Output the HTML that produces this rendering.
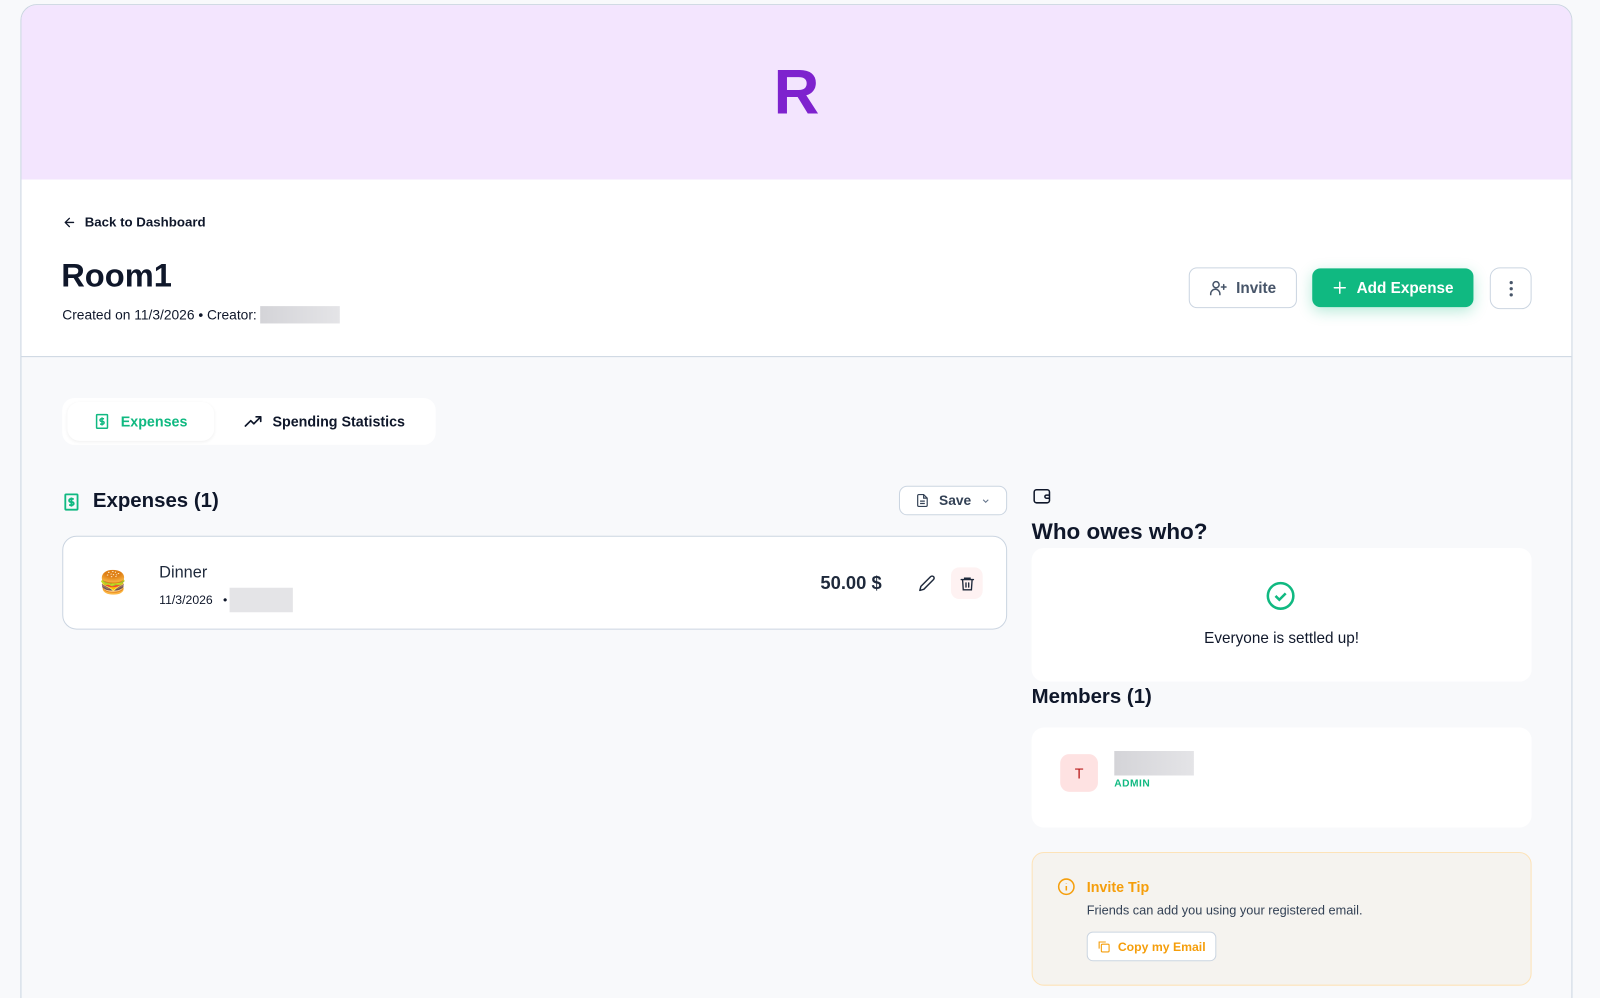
<!DOCTYPE html>
<html><head><meta charset="utf-8"><style>
*{box-sizing:border-box;margin:0;padding:0}
html,body{width:1600px;height:998px;overflow:hidden;background:#f8f9fb}
body{font-family:"Liberation Sans",Arial,sans-serif;color:#0f172a;position:relative}
.wrap{position:absolute;left:0;top:0;width:1568px;height:978px;transform:scale(1.0204);transform-origin:0 0}
.card{position:absolute;left:20px;top:4px;width:1521px;height:1010px;border:1px solid #cbd5e1;border-radius:16px 16px 0 0;overflow:hidden;background:#f8f9fb}
.banner{height:171px;background:#f3e5fe;display:flex;align-items:center;justify-content:center;font-size:62px;font-weight:bold;color:#7e22ce}
.head{background:#fff;height:174px;border-bottom:1px solid #cbd5e1;position:relative}
.abs{position:absolute}
.btn{position:absolute;border:1px solid #cbd5e1;border-radius:8px;background:#fff;display:flex;align-items:center;justify-content:center;gap:8px}
.blur{display:inline-block;background:linear-gradient(90deg,#d4d4d8,#e4e4e7);}
.white{position:absolute;background:#fff;border-radius:12px}
</style></head><body><div class="wrap">
<div class="card">
<div class="banner">R</div>
<div class="head">
 <div class="abs" style="left:40px;top:34px;font-size:13px;font-weight:bold;display:flex;align-items:center;gap:8px">
  <svg width="14" height="14" viewBox="0 0 24 24" fill="none" stroke="#0f172a" stroke-width="2.2" stroke-linecap="round" stroke-linejoin="round"><path d="M19 12H5M12 19l-7-7 7-7"/></svg>Back to Dashboard</div>
 <div class="abs" style="left:39px;top:76px;font-size:32px;font-weight:bold">Room1</div>
 <div class="abs" style="left:40px;top:124px;font-size:13.5px;display:flex;align-items:center">Created on 11/3/2026 • Creator:&nbsp;<span class="blur" style="width:78px;height:17px"></span></div>
 <div class="btn" style="left:1144px;top:86px;width:106px;height:40px;color:#475569;font-size:15px;font-weight:bold">
  <svg width="18" height="18" viewBox="0 0 24 24" fill="none" stroke="#475569" stroke-width="2" stroke-linecap="round"><circle cx="9" cy="8" r="4"/><path d="M2 21v-1a6 6 0 0 1 12 0v1M19 8v6M16 11h6"/></svg>Invite</div>
 <div class="btn" style="left:1265px;top:87px;width:158px;height:38px;background:#10b981;border:none;color:#fff;font-size:15px;font-weight:bold;box-shadow:0 4px 14px rgba(16,185,129,.3)">
  <svg width="16" height="16" viewBox="0 0 24 24" fill="none" stroke="#fff" stroke-width="2.2" stroke-linecap="round"><path d="M12 4v16M4 12h16"/></svg>Add Expense</div>
 <div class="btn" style="left:1439px;top:86px;width:41px;height:41px;border-radius:10px">
  <svg width="4" height="16" viewBox="0 0 4 16"><circle cx="2" cy="2" r="1.6" fill="#475569"/><circle cx="2" cy="8" r="1.6" fill="#475569"/><circle cx="2" cy="14" r="1.6" fill="#475569"/></svg></div>
</div>
<div class="white" style="left:40px;top:385px;width:366px;height:46px;"></div>
<div class="white" style="left:45px;top:389px;width:144px;height:38px;box-shadow:0 1px 3px rgba(0,0,0,.06);display:flex;align-items:center;justify-content:center;gap:10px;color:#10b981;font-weight:bold;font-size:14px">
 <svg width="16" height="16" viewBox="0 0 24 24" fill="none" stroke="#10b981" stroke-width="2.2"><rect x="4" y="2" width="16" height="20" rx="1"/><path d="M15 8h-4a1.5 1.5 0 0 0 0 4h2a1.5 1.5 0 0 1 0 4H9M12 6v12"/></svg>Expenses</div>
<div class="abs" style="left:218px;top:400px;font-size:14px;font-weight:bold;display:flex;align-items:center;gap:10px">
 <svg width="18" height="14" viewBox="0 0 24 16" fill="none" stroke="#0f172a" stroke-width="2.2" stroke-linecap="round" stroke-linejoin="round"><path d="M2 14l7-7 4 4 9-9M16 2h6v6"/></svg>Spending Statistics</div>
<div class="abs" style="left:40px;top:475px;display:flex;align-items:center;gap:12px;font-size:20px;font-weight:bold">
 <svg width="18" height="20" viewBox="0 0 24 24" fill="none" stroke="#10b981" stroke-width="2.4"><rect x="4" y="2" width="16" height="20" rx="1"/><path d="M15 8h-4a1.5 1.5 0 0 0 0 4h2a1.5 1.5 0 0 1 0 4H9M12 6v12"/></svg>Expenses (1)</div>
<div class="btn" style="left:860px;top:471px;width:106px;height:29px;font-size:13.5px;color:#334155;gap:9px;font-weight:bold">
 <svg width="14" height="15" viewBox="0 0 24 24" fill="none" stroke="#334155" stroke-width="2"><path d="M14 2H6a2 2 0 0 0-2 2v16a2 2 0 0 0 2 2h12a2 2 0 0 0 2-2V8z"/><path d="M14 2v6h6M8 13h8M8 17h8"/></svg>Save
 <svg width="10" height="10" viewBox="0 0 24 24" fill="none" stroke="#64748b" stroke-width="2.5"><path d="M6 9l6 6 6-6"/></svg></div>
<div class="white" style="left:40px;top:520px;width:926px;height:92px;border:1px solid #cbd5e1;border-radius:14px">
 <div class="abs" style="left:35px;top:34px;font-size:22px;line-height:1">🍔</div>
 <div class="abs" style="left:94px;top:27px;font-size:16px;color:#1e293b">Dinner</div>
 <div class="abs" style="left:94px;top:50px;font-size:12px;display:flex;align-items:center">11/3/2026 &nbsp;&nbsp;•<span class="blur" style="width:62px;height:24px;margin-left:2px;background:#e4e4e7"></span></div>
 <div class="abs" style="left:742px;top:35px;font-size:18px;color:#1e293b;font-weight:bold">50.00 $</div>
 <svg class="abs" style="left:838px;top:37px" width="17" height="17" viewBox="0 0 24 24" fill="none" stroke="#1e293b" stroke-width="2" stroke-linecap="round" stroke-linejoin="round"><path d="M17 3a2.8 2.8 0 0 1 4 4L7.5 20.5 2 22l1.5-5.5z"/></svg>
 <div class="abs" style="left:870px;top:30px;width:31px;height:31px;border-radius:8px;background:#fef2f2;display:flex;align-items:center;justify-content:center">
 <svg width="16" height="16" viewBox="0 0 24 24" fill="none" stroke="#1e293b" stroke-width="2" stroke-linecap="round"><path d="M3 6h18M8 6V4h8v2M5 6l1 15h12l1-15M10 11v6M14 11v6"/></svg></div>
</div>
<svg class="abs" style="left:991px;top:472px" width="18" height="18" viewBox="0 0 24 24" fill="none" stroke="#0f172a" stroke-width="2"><rect x="2" y="4" width="20" height="17" rx="3"/><path d="M22 11h-4a2 2 0 0 0 0 4h4"/></svg>
<div class="abs" style="left:990px;top:503px;font-size:22px;font-weight:bold">Who owes who?</div>
<div class="white" style="left:990px;top:532px;width:490px;height:131px">
 <svg class="abs" style="left:229px;top:32px" width="30" height="30" viewBox="0 0 24 24" fill="none" stroke="#10b981" stroke-width="2"><circle cx="12" cy="12" r="10"/><path d="M8 12l3 3 5-5"/></svg>
 <div class="abs" style="left:0;width:490px;text-align:center;top:80px;font-size:15px;color:#0f172a">Everyone is settled up!</div>
</div>
<div class="abs" style="left:990px;top:667px;font-size:20px;font-weight:bold">Members (1)</div>
<div class="white" style="left:990px;top:708px;width:490px;height:98px">
 <div class="abs" style="left:28px;top:26px;width:37px;height:37px;border-radius:9px;background:#fee2e2;color:#b91c1c;font-size:14px;display:flex;align-items:center;justify-content:center">T</div>
 <span class="blur abs" style="left:81px;top:23px;width:78px;height:24px"></span>
 <div class="abs" style="left:81px;top:50px;font-size:10px;font-weight:bold;color:#10b981;letter-spacing:.5px">ADMIN</div>
</div>
<div class="abs" style="left:990px;top:830px;width:490px;height:131px;border:1px solid #fde3b8;border-radius:12px;background:#f5f3ef">
 <svg class="abs" style="left:24px;top:24px" width="18" height="18" viewBox="0 0 24 24" fill="none" stroke="#f59e0b" stroke-width="2"><circle cx="12" cy="12" r="10"/><path d="M12 11v6M12 7.5v.5"/></svg>
 <div class="abs" style="left:53px;top:25px;font-size:14px;font-weight:bold;color:#f59e0b">Invite Tip</div>
 <div class="abs" style="left:53px;top:49px;font-size:12.5px;color:#334155">Friends can add you using your registered email.</div>
 <div class="btn" style="left:53px;top:77px;width:127px;height:29px;gap:7px;color:#f59e0b;font-size:12px;font-weight:bold;border-radius:6px">
  <svg width="13" height="13" viewBox="0 0 24 24" fill="none" stroke="#f59e0b" stroke-width="2"><rect x="8" y="8" width="14" height="14" rx="2"/><path d="M4 16V4h12"/></svg>Copy my Email</div>
</div>
</div>
</div></body></html>
